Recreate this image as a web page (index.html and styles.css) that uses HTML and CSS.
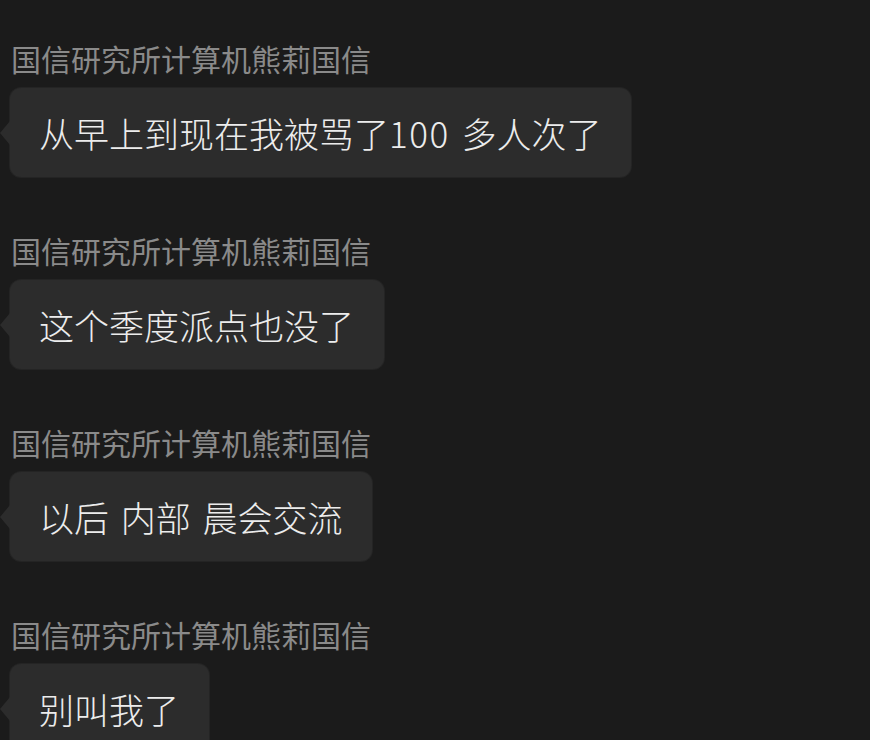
FILE: index.html
```html
<!DOCTYPE html>
<html lang="zh-CN">
<head>
  <meta charset="UTF-8">
  <title>群聊</title>
  <link rel="stylesheet" href="styles.css">
</head>
<body>
  <div class="chat">
    <div class="msg">
      <div class="name">国信研究所计算机熊莉国信</div>
      <div class="bubble">从早上到现在我被骂了<span class="num">100</span> 多人次了</div>
    </div>
    <div class="msg">
      <div class="name">国信研究所计算机熊莉国信</div>
      <div class="bubble">这个季度派点也没了</div>
    </div>
    <div class="msg">
      <div class="name">国信研究所计算机熊莉国信</div>
      <div class="bubble">以后 内部 晨会交流</div>
    </div>
    <div class="msg">
      <div class="name">国信研究所计算机熊莉国信</div>
      <div class="bubble">别叫我了</div>
    </div>
  </div>
</body>
</html>
```

FILE: styles.css
```css
html, body {
  margin: 0;
  background: #1b1b1b;
  height: 100%;
  overflow: hidden;
}
body {
  font-family: "Noto Sans CJK SC", "Noto Sans", sans-serif;
}
.chat {
  padding: 40px 0 0 10px;
  display: flex;
  flex-direction: column;
  gap: 55px;
}
.msg {
  display: flex;
  flex-direction: column;
  align-items: flex-start;
  gap: 12px;
}
.name {
  font-size: 30px;
  line-height: 36px;
  color: #8a8a8a;
  padding-left: 1px;
}
.bubble {
  position: relative;
  background: #2c2c2c;
  color: #ececec;
  font-size: 35px;
  font-weight: 300;
  line-height: 45px;
  word-spacing: 4px;
  padding: 22px 30px 22px 29px;
  border-radius: 11px;
  box-shadow: 0 0 0 1px #242424;
  white-space: pre;
}
.bubble .num {
  letter-spacing: 1.5px;
}
.bubble::before {
  content: "";
  position: absolute;
  left: -10px;
  top: 33px;
  border-style: solid;
  border-width: 12px 10px 12px 0;
  border-color: transparent #2c2c2c transparent transparent;
}
```
